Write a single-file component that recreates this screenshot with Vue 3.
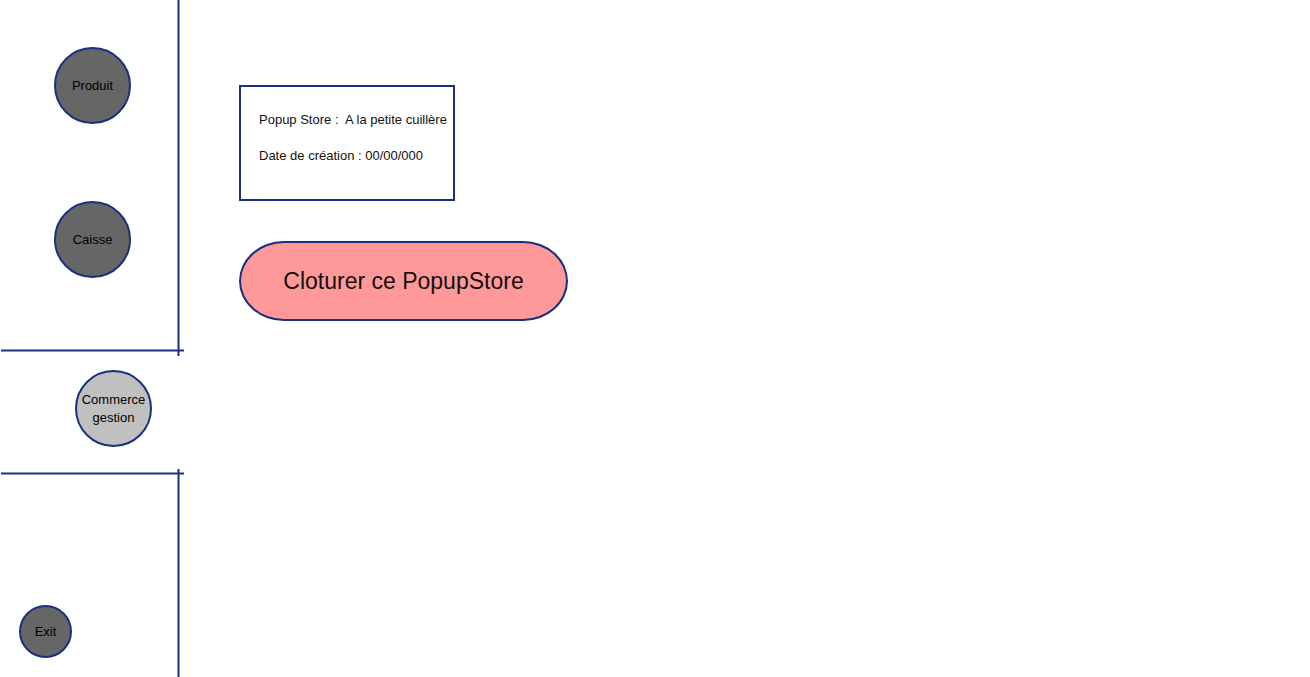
<script setup>
const mainLinks = ['Produit', 'Caisse']
const store = { name: 'A la petite cuillère', created: '00/00/000' }
</script>

<template>
  <div class="page">
    <nav class="sidebar" aria-label="Navigation">
      <div class="group group-top">
        <button v-for="label in mainLinks" :key="label" type="button" class="round">{{ label }}</button>
      </div>
      <div class="group group-current">
        <button type="button" class="round current" aria-current="page">Commerce gestion</button>
      </div>
      <div class="group group-bottom">
        <button type="button" class="round small">Exit</button>
      </div>
    </nav>
    <main class="content">
      <section class="info">
        <p>Popup Store :&nbsp; {{ store.name }}</p>
        <p>Date de création : {{ store.created }}</p>
      </section>
      <button type="button" class="close-store">Cloturer ce PopupStore</button>
    </main>
  </div>
</template>

<style>
body {
  margin: 0;
  background: #fff;
}
</style>

<style scoped>
.page {
  --navy: #183080;
  --edge: rgb(24 48 128 / 50%);
  display: flex;
  min-height: 100vh;
  font: 13px/18px "Liberation Sans", Arial, sans-serif;
  color: #111;
}

.sidebar {
  display: flex;
  flex-direction: column;
  flex: none;
  width: 184px;
}

.group {
  position: relative;
  display: flex;
  flex-direction: column;
  align-items: flex-start;
}

.group-top {
  gap: 77px;
  padding: 47px 0 71px 54px;
}

.group-current {
  padding: 21px 0 28px 75px;
}

.group-bottom {
  flex: 1;
  justify-content: flex-end;
  padding: 20px 0 19px 19px;
}

/* vertical rails, each reaching a little past its crossing rule */
.group-top::after,
.group-bottom::after {
  content: "";
  position: absolute;
  right: 4px;
  z-index: 1;
  width: 3px;
  background: linear-gradient(to right, var(--edge) 1px, var(--navy) 1px 2px, var(--edge) 2px);
}

.group-top::after {
  top: 0;
  bottom: -7px;
}

.group-bottom::after {
  top: -6px;
  bottom: 0;
}

/* horizontal rules around the current entry */
.group-current::before,
.group-current::after {
  content: "";
  position: absolute;
  left: 1px;
  right: 0;
  height: 3px;
  background: linear-gradient(var(--edge) 1px, var(--navy) 1px 2px, var(--edge) 2px);
}

.group-current::before {
  top: 0;
}

.group-current::after {
  bottom: 0;
}

.round {
  box-sizing: border-box;
  display: flex;
  align-items: center;
  justify-content: center;
  width: 77px;
  height: 77px;
  padding: 0;
  border: 2px solid var(--navy);
  border-radius: 50%;
  background: #666;
  color: #000;
  font: inherit;
  text-align: center;
  cursor: pointer;
}

.round.current {
  background: #c0c0c0;
}

.round.small {
  width: 53px;
  height: 53px;
}

.content {
  display: flex;
  flex: 1;
  flex-direction: column;
  align-items: flex-start;
  gap: 40px;
  padding: 85px 55px 40px;
}

.info {
  box-sizing: border-box;
  min-width: 216px;
  padding: 24px 4px 34px 18px;
  border: 2px solid var(--navy);
}

.info p {
  margin: 0;
  white-space: nowrap;
}

.info p + p {
  margin-top: 18px;
}

.close-store {
  box-sizing: border-box;
  min-width: 329px;
  height: 80px;
  padding: 0 36px;
  border: 2px solid var(--navy);
  border-radius: 45px / 40px;
  background: #f99;
  color: inherit;
  font: inherit;
  font-size: 23px;
  cursor: pointer;
}
</style>
